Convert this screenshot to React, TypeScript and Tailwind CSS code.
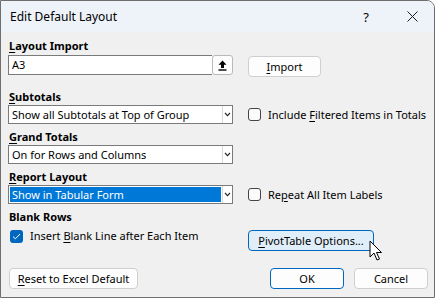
import React from "react";

function Chevron() {
  return (
    <svg width="7" height="5" viewBox="0 0 7 5">
      <path d="M1 1 L3.5 3.6 L6 1" fill="none" stroke="#222" strokeWidth="1.1" />
    </svg>
  );
}

function Select({ value, selected }: { value: string; selected?: boolean }) {
  return (
    <div className="w-[225px] h-[19px] shrink-0 flex border border-[#7a7a7a] bg-white">
      <div className="flex-1 p-[1px] flex">
        <div
          className={
            "flex-1 flex items-center pl-[2px] " +
            (selected ? "bg-[#0078d7] text-white" : "")
          }
        >
          {value}
        </div>
      </div>
      <div className="w-[10px] border-l border-[#d9d9d9] flex items-center justify-center">
        <Chevron />
      </div>
    </div>
  );
}

function Check({ checked, children }: { checked?: boolean; children: React.ReactNode }) {
  return (
    <div className="flex items-center gap-[7px] whitespace-nowrap">
      {checked ? (
        <div className="w-[13px] h-[13px] shrink-0 rounded-[3px] bg-[#0067c0] flex items-center justify-center">
          <svg width="9" height="7" viewBox="0 0 9 7">
            <path d="M1 3.6 L3.4 5.8 L8 1" fill="none" stroke="#fff" strokeWidth="1" />
          </svg>
        </div>
      ) : (
        <div className="w-[13px] h-[13px] shrink-0 rounded-[3px] border border-[#444] bg-[#fbfbfb]" />
      )}
      <span>{children}</span>
    </div>
  );
}

function Btn({
  children,
  className,
}: {
  children: React.ReactNode;
  className?: string;
}) {
  return (
    <div
      className={
        "h-[21px] flex items-center justify-center rounded-[4px] border whitespace-nowrap " +
        (className ?? "border-[#cfcfcf] bg-[#fdfdfd]")
      }
    >
      {children}
    </div>
  );
}

export default function App() {
  return (
    <div className="w-[437px] h-[299px] bg-white font-['Noto_Sans',sans-serif] text-[11px] leading-[16px] text-black">
      <div className="relative w-[435px] h-[298px] border border-[#6e6e6e] rounded-tr-[8px] bg-[#f0f0f0] flex flex-col overflow-hidden">
        {/* Title bar */}
        <div className="h-[31px] shrink-0 bg-[#eef3fa] flex items-center pl-[9px] pr-[16px] text-[12px]">
          <span>Edit Default Layout</span>
          <span className="ml-auto mr-[38px] text-[13px]">?</span>
          <svg width="11" height="11" viewBox="0 0 11 11">
            <path d="M0.5 0.5 L10.5 10.5 M10.5 0.5 L0.5 10.5" stroke="#1a1a1a" strokeWidth="1" />
          </svg>
        </div>

        {/* Body */}
        <div className="flex flex-col pl-[7px]">
          <div className="mt-[6px] pl-[1px] font-bold">
            <u className="underline-offset-2">L</u>ayout Import
          </div>
          <div className="mt-[1px] flex items-start">
            <div className="w-[225px] h-[20px] shrink-0 flex">
              <div className="flex-1 border border-[#7a7a7a] border-r-0 bg-white flex items-center pl-[3px]">
                A3
              </div>
              <div className="w-[21px] rounded-[3px] border border-[#b9b9b9] bg-[#fdfdfd] flex items-center justify-center">
                <svg width="9" height="11" viewBox="0 0 9 11">
                  <path d="M4.5 0.5 L8.5 4.8 L6 4.8 L6 8 L3 8 L3 4.8 L0.5 4.8 Z" fill="#000" />
                  <rect x="0.5" y="9.3" width="8" height="1.4" fill="#000" />
                </svg>
              </div>
            </div>
            <div className="ml-[15px] mt-[1px] w-[73px]">
              <Btn>
                <span>
                  <u className="underline-offset-2">I</u>mport
                </span>
              </Btn>
            </div>
          </div>

          <div className="mt-[12px] pl-[1px] font-bold">
            <u className="underline-offset-2">S</u>ubtotals
          </div>
          <div className="flex items-center">
            <Select value="Show all Subtotals at Top of Group" />
            <div className="ml-[15px]">
              <Check>
                Include <u className="underline-offset-2">F</u>iltered Items in Totals
              </Check>
            </div>
          </div>

          <div className="mt-[5px] pl-[1px] font-bold">
            <u className="underline-offset-2">G</u>rand Totals
          </div>
          <div className="flex items-center">
            <Select value="On for Rows and Columns" />
          </div>

          <div className="mt-[5px] pl-[1px] font-bold">
            <u className="underline-offset-2">R</u>eport Layout
          </div>
          <div className="flex items-center">
            <Select value="Show in Tabular Form" selected />
            <div className="ml-[15px]">
              <Check>
                Re<u className="underline-offset-2">p</u>eat All Item Labels
              </Check>
            </div>
          </div>

          <div className="mt-[5px] pl-[1px] font-bold">Blank Rows</div>
          <div className="mt-[3px] flex items-start">
            <div className="w-[225px] shrink-0 pl-[2px]">
              <Check checked>
                Insert <u className="underline-offset-2">B</u>lank Line after Each Item
              </Check>
            </div>
            <div className="ml-[15px] mt-[2px] w-[126px]">
              <Btn className="border-[#0067c0] bg-[#e0eef9]">
                <span>
                  <u className="underline-offset-2">P</u>ivotTable Options...
                </span>
              </Btn>
            </div>
          </div>

          <div className="mt-[17px] flex items-center pr-[6px]">
            <div className="ml-[1px] w-[129px]">
              <Btn>
                <span>
                  <u className="underline-offset-2">R</u>eset to Excel Default
                </span>
              </Btn>
            </div>
            <div className="ml-auto w-[74px]">
              <Btn className="border-[#0067c0] bg-[#fdfdfd]">OK</Btn>
            </div>
            <div className="ml-[10px] w-[74px]">
              <Btn>Cancel</Btn>
            </div>
          </div>
        </div>

        {/* mouse cursor */}
        <svg
          className="absolute left-[368px] top-[239px]"
          width="14"
          height="22"
          viewBox="0 0 14 22"
        >
          <path
            d="M1 1 L1 17 L5 13 L8 20 L10.5 19 L7.5 12.5 L12.5 12.5 Z"
            fill="#fff"
            stroke="#000"
            strokeWidth="1"
            strokeLinejoin="round"
          />
        </svg>
      </div>
    </div>
  );
}
